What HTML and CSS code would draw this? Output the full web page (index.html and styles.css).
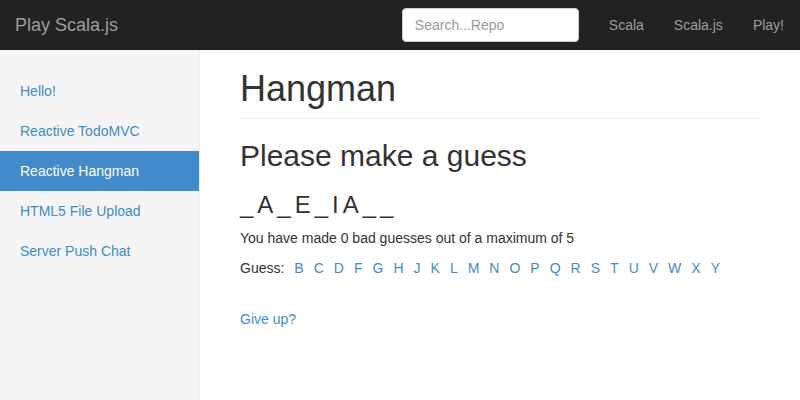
FILE: index.html
```html
<!DOCTYPE html>
<html lang="en">
<head>
<meta charset="utf-8">
<title>Play Scala.js - Hangman</title>
<link rel="stylesheet" href="styles.css">
</head>
<body>
<nav class="navbar">
  <a class="brand" href="#">Play Scala.js</a>
  <div class="spacer"></div>
  <form class="search-form">
    <input class="search" type="text" placeholder="Search...Repo">
  </form>
  <ul class="nav-links">
    <li><a href="#">Scala</a></li>
    <li><a href="#">Scala.js</a></li>
    <li><a href="#">Play!</a></li>
  </ul>
</nav>
<div class="layout">
  <aside class="sidebar">
    <ul class="side-nav">
      <li><a href="#">Hello!</a></li>
      <li><a href="#">Reactive TodoMVC</a></li>
      <li class="active"><a href="#">Reactive Hangman</a></li>
      <li><a href="#">HTML5 File Upload</a></li>
      <li><a href="#">Server Push Chat</a></li>
    </ul>
  </aside>
  <main class="main">
    <div class="page-header"><h1>Hangman</h1></div>
    <h2>Please make a guess</h2>
    <h3 class="word">_A_E_IA__</h3>
    <p>You have made 0 bad guesses out of a maximum of 5</p>
    <div class="guess">
      <span>Guess:</span>
      <a href="#">B</a><a href="#">C</a><a href="#">D</a><a href="#">F</a><a href="#">G</a><a href="#">H</a><a href="#">J</a><a href="#">K</a><a href="#">L</a><a href="#">M</a><a href="#">N</a><a href="#">O</a><a href="#">P</a><a href="#">Q</a><a href="#">R</a><a href="#">S</a><a href="#">T</a><a href="#">U</a><a href="#">V</a><a href="#">W</a><a href="#">X</a><a href="#">Y</a>
    </div>
    <p class="giveup"><a href="#">Give up?</a></p>
  </main>
</div>
</body>
</html>
```
FILE: styles.css
```css
* { box-sizing: border-box; }
html, body { margin: 0; padding: 0; }
body {
  font-family: "Liberation Sans", Arial, sans-serif;
  font-size: 14px;
  line-height: 20px;
  color: #333;
  background: #fff;
}
a { color: #428bca; text-decoration: none; }
ul { list-style: none; margin: 0; padding: 0; }

.navbar {
  display: flex;
  align-items: center;
  height: 50px;
  background: #222;
}
.brand {
  padding: 15px;
  font-size: 18px;
  line-height: 20px;
  color: #9d9d9d;
}
.spacer { flex: 1; }
.search-form { margin: 0 15px 0 0; }
.search {
  display: block;
  width: 177px;
  height: 34px;
  padding: 6px 12px;
  font-family: "Liberation Sans", Arial, sans-serif;
  font-size: 14px;
  line-height: 20px;
  color: #555;
  background: #fff;
  border: 1px solid #ccc;
  border-radius: 4px;
}
.search::placeholder { color: #999; }
.nav-links { display: flex; margin-right: 1px; }
.nav-links a {
  display: block;
  padding: 15px;
  color: #9d9d9d;
}

.layout {
  display: flex;
  min-height: 350px;
}
.sidebar {
  width: 200px;
  flex: none;
  padding-top: 21px;
  background: #f5f5f5;
  border-right: 1px solid #eee;
}
.side-nav a {
  display: block;
  padding: 10px 20px;
}
.side-nav .active a {
  background: #428bca;
  color: #fff;
}

.main {
  flex: 1;
  padding: 0 40px;
}
h1, h2, h3 {
  font-family: "Liberation Sans", Arial, sans-serif;
  font-weight: normal;
  line-height: 1.1;
  color: #333;
}
.page-header {
  margin: 19px 0 20px;
  padding-bottom: 9px;
  border-bottom: 1px solid #eee;
}
.page-header h1 { margin: 0; font-size: 36px; }
h2 { font-size: 30px; margin: 20px 0 10px; }
h3 { font-size: 24px; margin: 20px 0 10px; }
.word { letter-spacing: 4px; }
p { margin: 0 0 10px; }
.guess {
  display: flex;
  gap: 10px;
  margin-bottom: 10px;
}
.giveup { margin-top: 31px; }
```
